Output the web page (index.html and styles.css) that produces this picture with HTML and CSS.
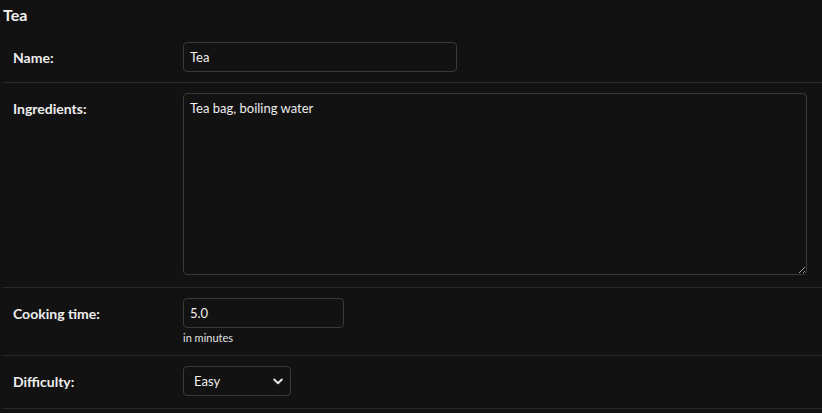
FILE: index.html
```html
<!DOCTYPE html>
<html>
<head>
<meta charset="utf-8">
<link rel="stylesheet" href="styles.css">
</head>
<body>
<div class="page">
  <h2 class="title">Tea</h2>
  <fieldset class="module">
    <div class="form-row">
      <label class="lbl">Name:</label>
      <input class="inp inp-name" type="text" value="Tea">
    </div>
    <div class="form-row">
      <label class="lbl">Ingredients:</label>
      <textarea class="inp inp-area">Tea bag, boiling water</textarea>
    </div>
    <div class="form-row">
      <label class="lbl">Cooking time:</label>
      <div class="field">
        <input class="inp inp-time" type="text" value="5.0">
        <div class="help">in minutes</div>
      </div>
    </div>
    <div class="form-row">
      <label class="lbl">Difficulty:</label>
      <div class="select-wrap">
        <select class="inp inp-select"><option>Easy</option></select>
        <svg class="chev" width="10" height="7" viewBox="0 0 10 7"><path d="M1.2 1.5 L5 5.2 L8.8 1.5" fill="none" stroke="#e8e8e8" stroke-width="1.9" stroke-linecap="round" stroke-linejoin="round"/></svg>
      </div>
    </div>
  </fieldset>
</div>
</body>
</html>
```

FILE: styles.css
```css
html, body {
  margin: 0;
  padding: 0;
  background: #121212;
  color: #eeeeee;
  font-family: "Lato", "Noto Sans", sans-serif;
  font-size: 13px;
}
.page {
  padding: 0 0 0 3px;
}
.title {
  margin: 0;
  padding: 6px 0 0 0;
  height: 26px;
  font-size: 16px;
  font-weight: bold;
  line-height: 18px;
  color: #f2f2f2;
}
.module {
  margin: 0;
  padding: 0;
  border: 0;
  min-width: 0;
}
.form-row {
  display: flex;
  align-items: flex-start;
  padding: 10px;
  border-bottom: 1px solid #2a2a2a;
}
.lbl {
  width: 160px;
  min-width: 160px;
  padding: 4px 10px 0 0;
  font-weight: bold;
  font-size: 14px;
  line-height: 24px;
  color: #eeeeee;
}
.inp {
  box-sizing: border-box;
  background: #121212;
  color: #eeeeee;
  border: 1px solid #3a3a3a;
  border-radius: 4px;
  font-family: "Lato", "Noto Sans", sans-serif;
  font-size: 13px;
  padding: 5px 6px;
  margin: 0;
  outline: none;
}
.inp-name {
  width: 274px;
  height: 30px;
}
.inp-area {
  width: 624px;
  height: 182px;
  padding: 6px 6px;
  line-height: 17px;
  display: block;
  margin-bottom: 2px;
}
.inp-time {
  width: 161px;
  height: 30px;
  display: block;
}
.help {
  margin-top: 3px;
  font-size: 11px;
  line-height: 14px;
  color: #e0e0e0;
}
.select-wrap {
  position: relative;
  width: 108px;
  margin-bottom: 2px;
}
.inp-select {
  -webkit-appearance: none;
  appearance: none;
  width: 108px;
  height: 30px;
  padding: 5px 10px;
  display: block;
}
.chev {
  position: absolute;
  right: 8px;
  top: 12px;
  pointer-events: none;
}
```
